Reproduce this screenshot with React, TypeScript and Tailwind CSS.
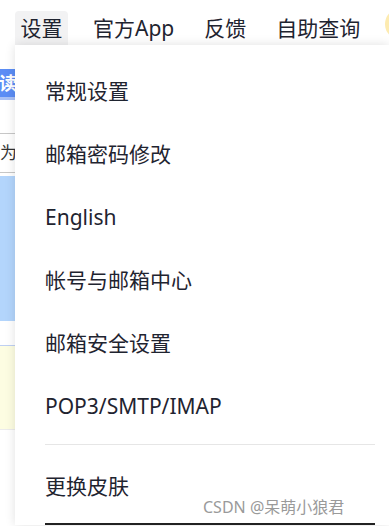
export default function App() {
  const items = ['常规设置', '邮箱密码修改', 'English', '帐号与邮箱中心', '邮箱安全设置', 'POP3/SMTP/IMAP'];
  const font = { fontFamily: '"Noto Sans", "Noto Sans CJK SC", sans-serif' };
  return (
    <div className="h-[526px] w-[389px] overflow-hidden bg-white text-[#1f2430]" style={font}>
      <header className="relative flex h-[45px] items-end text-[21px]">
        <span className="ml-[15px] flex h-[34px] w-[53px] items-center justify-center rounded-t-[4px] bg-[#f2f2f3] leading-none">设置</span>
        <span className="mb-[5px] ml-[25px] leading-[24px]">官方App</span>
        <span className="mb-[5px] ml-[30px] leading-[24px]">反馈</span>
        <span className="mb-[5px] ml-[30px] leading-[24px]">自助查询</span>
        <span className="absolute left-[385px] top-[8px] h-[32px] w-[32px] rounded-full bg-[#fdebb0]" />
      </header>
      <div className="flex">
        <div className="flex w-[15px] shrink-0 flex-col overflow-hidden">
          <div className="h-[24px] bg-white" />
          <div className="flex h-[28px] items-center justify-end overflow-hidden bg-[#5b8df5] text-[18px] font-bold leading-none text-white">
            <span className="-mr-[2px]">读</span>
          </div>
          <div className="h-[3px] bg-[#a9c1f6]" />
          <div className="h-[33px] bg-white" />
          <div className="h-[1px] bg-[#c7c7c7]" />
          <div className="flex h-[38px] items-center justify-end overflow-hidden text-[17px] text-[#333]">
            <span className="-mr-[2px]">为</span>
          </div>
          <div className="h-[1px] bg-[#c7c7c7]" />
          <div className="h-[3px] bg-white" />
          <div className="h-[145px] bg-[#b3d5fc]" />
          <div className="h-[24px] bg-white" />
          <div className="h-[1px] bg-[#bfd0f2]" />
          <div className="h-[83px] bg-[#fdfde2]" />
          <div className="h-[1px] bg-[#ececec]" />
          <div className="flex-1 bg-white" />
        </div>
        <div className="relative flex-1 bg-white pt-[15px] shadow-[0_0_10px_rgba(0,0,0,0.12)]">
          {items.map((t) => (
            <div key={t} className="flex h-[63px] items-center pl-[30px] text-[21px]">
              {t}
            </div>
          ))}
          <div className="ml-[30px] mr-[14px] mt-[6px] h-[1px] bg-[#e6e6e6]" />
          <div className="mt-[10px] flex h-[63px] items-center pl-[30px] text-[21px]">更换皮肤</div>
          <div className="ml-[30px] mr-[14px] mt-[5px] h-[2px] bg-[#222]" />
          <span className="absolute left-[188px] top-[450px] text-[16px] text-[#9a9a9a]">CSDN @呆萌小狼君</span>
        </div>
      </div>
    </div>
  );
}
